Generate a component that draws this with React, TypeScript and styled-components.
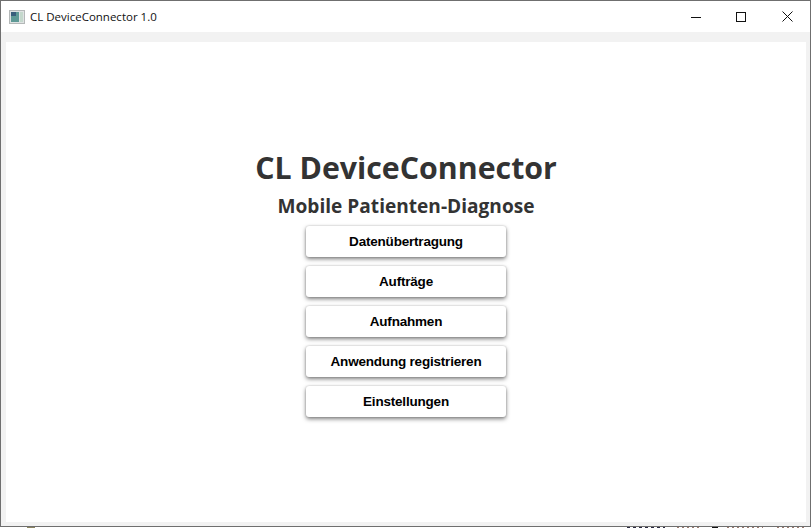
import React from "react";
import styled, { createGlobalStyle } from "styled-components";

const Global = createGlobalStyle`
  html, body { margin: 0; padding: 0; background: #fff; overflow: hidden; }
  #root { width: 811px; height: 528px; }
  * { box-sizing: border-box; }
`;

const Desktop = styled.div`
  width: 811px;
  height: 528px;
  background: #fff;
  display: flex;
  flex-direction: column;
`;

const Win = styled.div`
  width: 811px;
  height: 527px;
  flex: none;
  border: 1px solid #6f6f6f;
  background: #f2f2f2;
  display: flex;
  flex-direction: column;
`;

const BackdropSliver = styled.svg`
  display: block;
  width: 811px;
  height: 1px;
  flex: none;
`;

const TitleBar = styled.div`
  height: 31px;
  flex: none;
  background: #fff;
  display: flex;
  align-items: center;
`;

const AppIcon = styled.svg`
  width: 16px;
  height: 16px;
  margin-left: 8px;
  flex: none;
`;

const Title = styled.div`
  margin-left: 5px;
  font: 11.5px "Open Sans", "Noto Sans", sans-serif;
  color: #111;
  flex: 1;
`;

const Control = styled.div`
  width: 45px;
  height: 30px;
  display: flex;
  align-items: center;
  justify-content: center;
`;

const CloseControl = styled(Control)`
  margin-left: 2px;
`;

const Body = styled.div`
  flex: 1;
  margin: 10px 4px 4px 5px;
  background: #fff;
  display: flex;
  flex-direction: column;
  align-items: center;
  padding-top: 106px;
`;

const Heading = styled.h1`
  margin: 0;
  font: 700 30.3px/40px "Open Sans", sans-serif;
  color: #333;
  white-space: nowrap;
`;

const Sub = styled.h2`
  margin: 5px 0 0;
  font: 700 19.1px/27px "Open Sans", sans-serif;
  color: #333;
  white-space: nowrap;
`;

const Menu = styled.div`
  display: flex;
  flex-direction: column;
  gap: 9px;
  margin-top: 6px;
`;

const Button = styled.button`
  width: 200px;
  height: 31px;
  padding: 0;
  border: 0;
  border-radius: 3px;
  background: #fff;
  box-shadow: 0 2px 4px rgba(0, 0, 0, 0.5), 0 0 2px rgba(0, 0, 0, 0.2);
  font: 700 13.5px "Liberation Sans", Arial, sans-serif;
  letter-spacing: -0.2px;
  color: #000;
`;

const items = ["Datenübertragung", "Aufträge", "Aufnahmen", "Anwendung registrieren", "Einstellungen"];

export default function App() {
  return (
    <Desktop>
      <Global />
      <Win>
        <TitleBar>
          <AppIcon viewBox="0 0 16 16">
            <rect x="0.5" y="1.5" width="15" height="13" fill="#dfe3e3" stroke="#b4b8b8" />
            <rect x="2" y="3" width="8" height="10" fill="#5f9a96" />
            <rect x="2" y="3" width="5" height="4" fill="#3a5f7c" />
            <rect x="11" y="3" width="3" height="10" fill="#c4d8cc" />
          </AppIcon>
          <Title>CL DeviceConnector 1.0</Title>
          <Control>
            <svg width="10" height="10" viewBox="0 0 10 10"><path d="M0 5.5H10" stroke="#111" strokeWidth="1" /></svg>
          </Control>
          <Control>
            <svg width="10" height="10" viewBox="0 0 10 10"><rect x="0.5" y="0.5" width="9" height="9" fill="none" stroke="#111" /></svg>
          </Control>
          <CloseControl>
            <svg width="11" height="11" viewBox="0 0 11 11"><path d="M0.5 0.5L10.5 10.5M10.5 0.5L0.5 10.5" stroke="#111" strokeWidth="1" /></svg>
          </CloseControl>
        </TitleBar>
        <Body>
          <Heading>CL DeviceConnector</Heading>
          <Sub>Mobile Patienten-Diagnose</Sub>
          <Menu>
            {items.map((t) => (
              <Button key={t}>{t}</Button>
            ))}
          </Menu>
        </Body>
      </Win>
      <BackdropSliver viewBox="0 0 811 1">
        <path d="M27 .5H35" stroke="#8a8460" />
        <path d="M627 .5H665" stroke="#2a2a40" strokeDasharray="3 3" />
        <path d="M677 .5H702" stroke="#9a7a70" strokeDasharray="2 3" />
        <path d="M712 .5H718" stroke="#111" />
        <path d="M727 .5H763" stroke="#9a7a70" strokeDasharray="2 3" />
        <path d="M777 .5H805" stroke="#9a7a70" strokeDasharray="2 3" />
      </BackdropSliver>
    </Desktop>
  );
}
